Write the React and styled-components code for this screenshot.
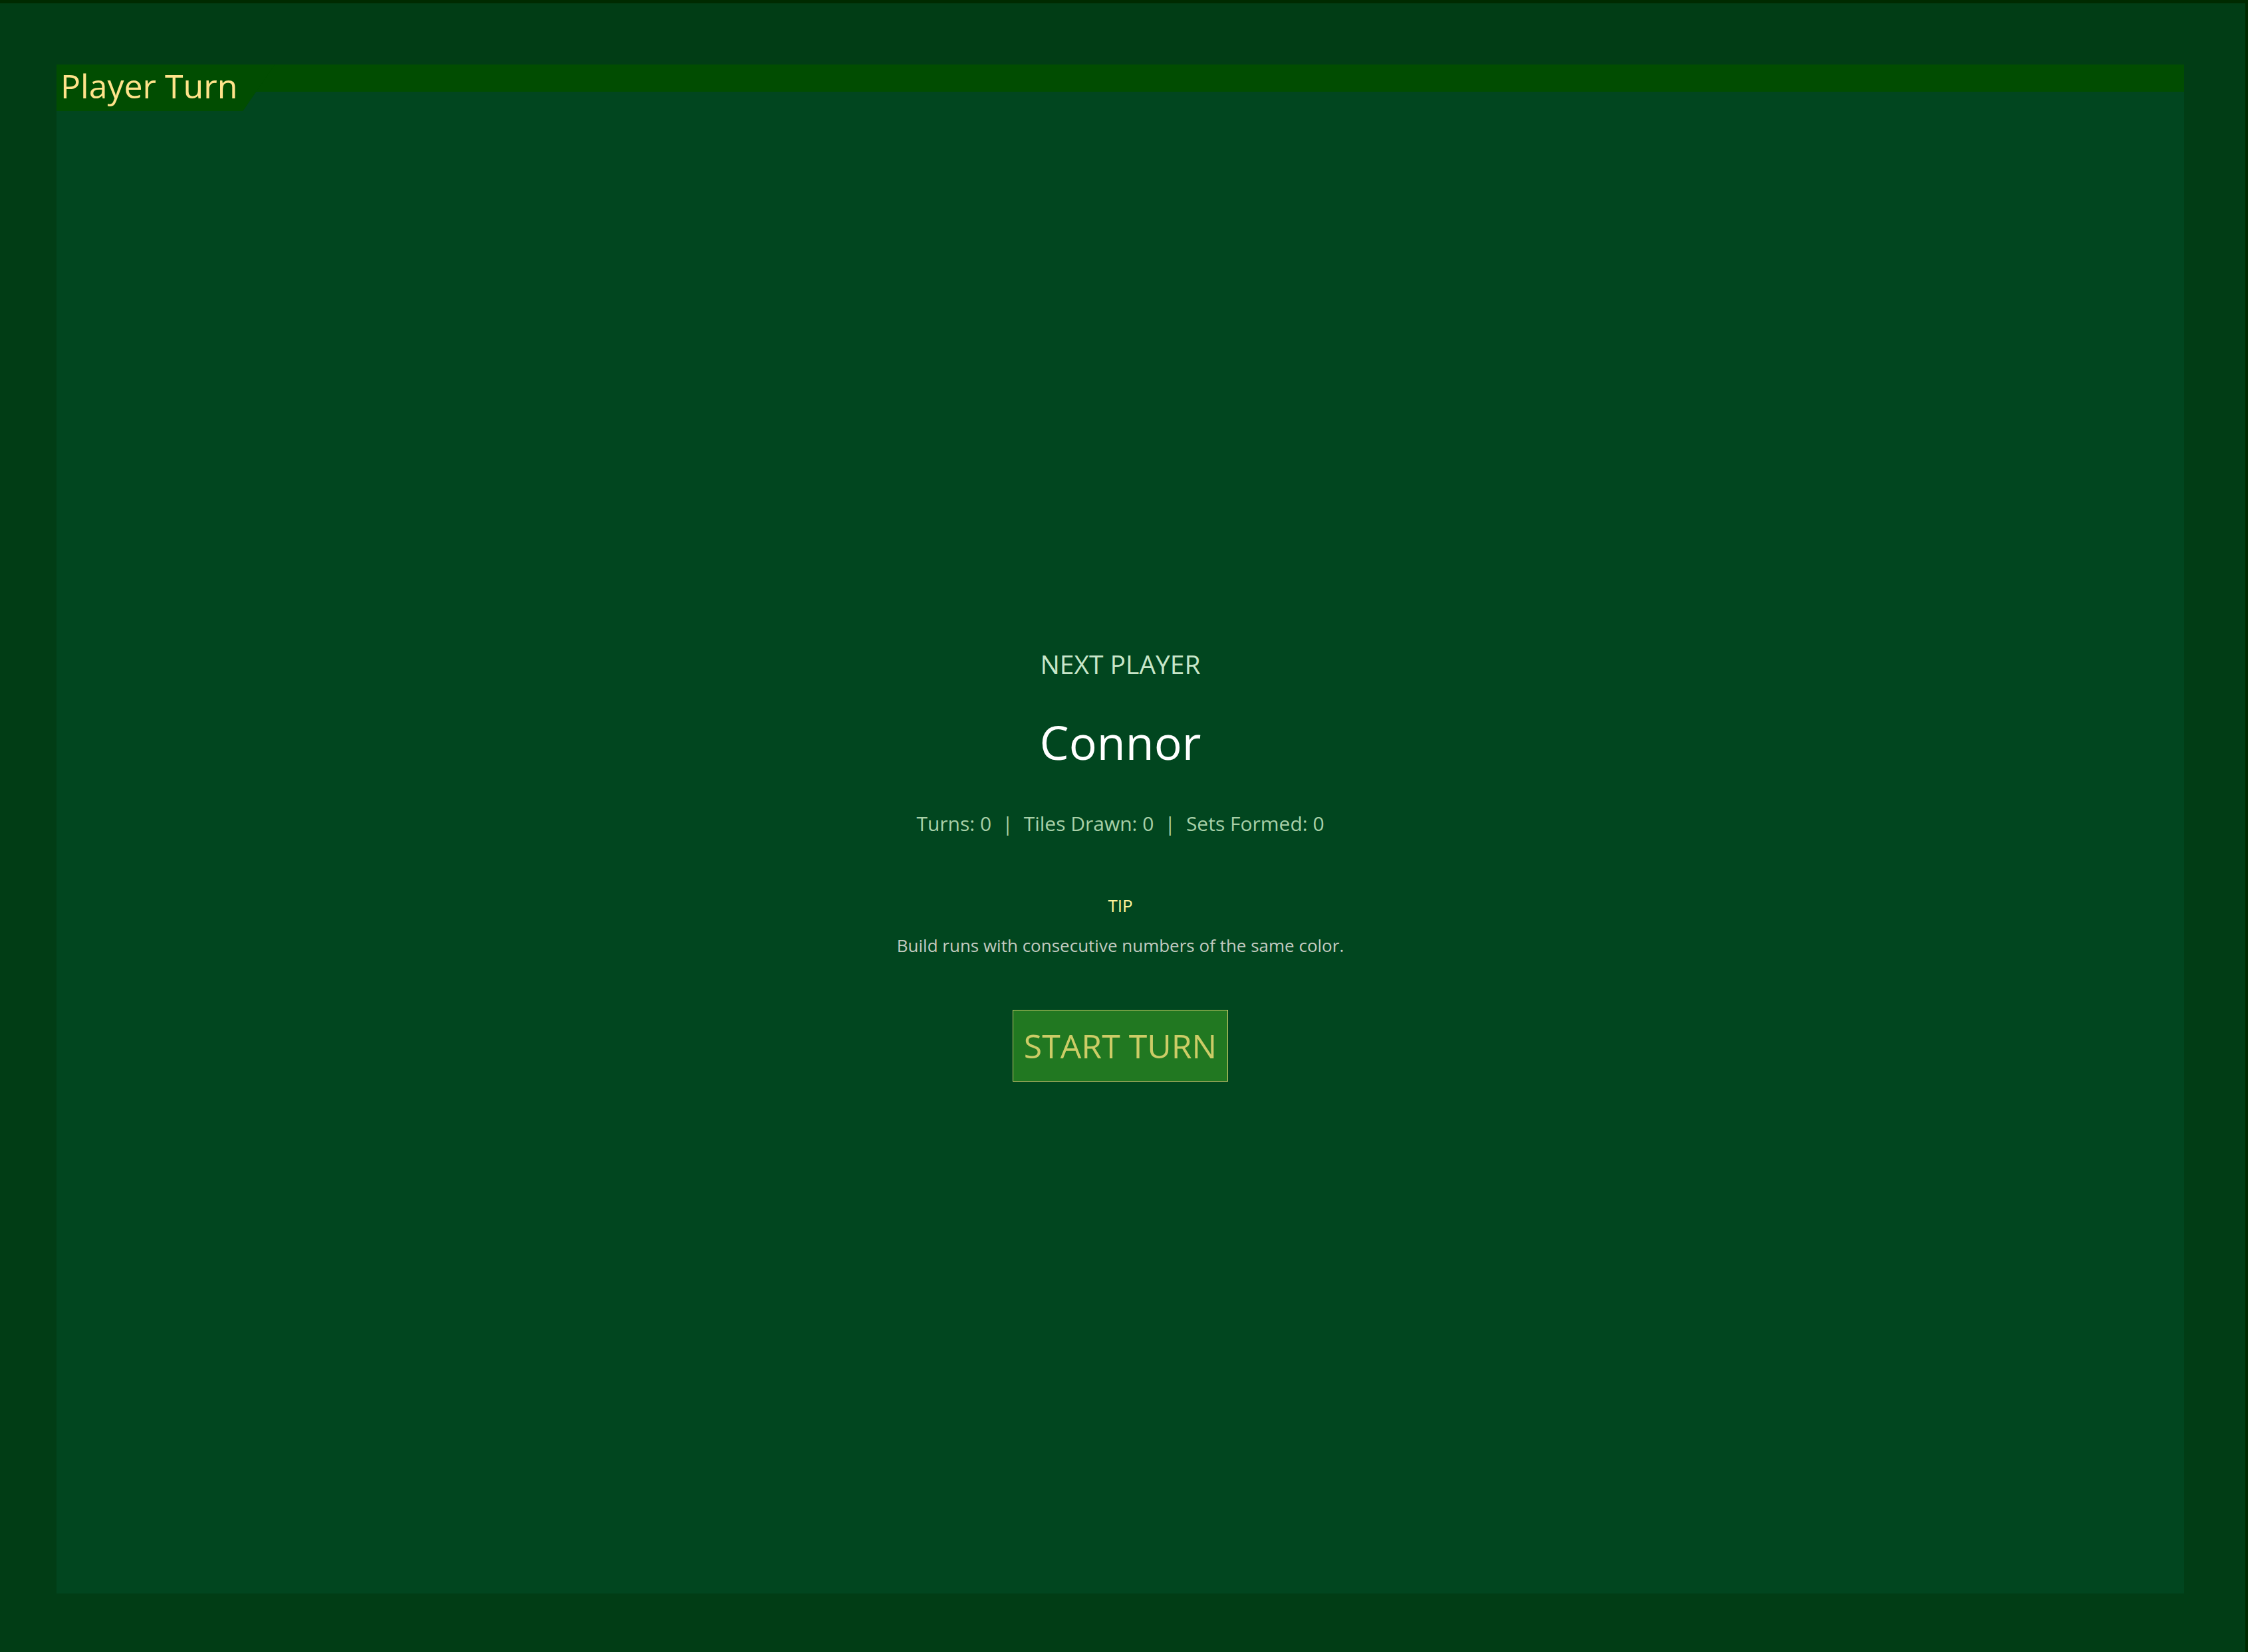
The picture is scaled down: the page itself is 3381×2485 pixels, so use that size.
import React from "react";
import styled, { createGlobalStyle } from "styled-components";

const GlobalStyle = createGlobalStyle`
  html, body {
    margin: 0;
    padding: 0;
    background: #002a00;
  }
  body {
    font-family: "Open Sans", "Noto Sans", sans-serif;
  }
`;

const Screen = styled.div`
  box-sizing: border-box;
  width: 3377px;
  height: 2480px;
  margin-top: 5px;
  background: #013d15;
  padding: 92px 92px 88px 85px;
  display: flex;
`;

const Panel = styled.section`
  flex: 1;
  display: flex;
  flex-direction: column;
  background: #01461f;
`;

const Header = styled.header`
  position: relative;
  height: 41px;
  background: #014d01;
  flex-shrink: 0;
`;

const Tab = styled.h1`
  position: absolute;
  top: 0;
  left: 0;
  margin: 0;
  padding: 2px 56px 8px 6px;
  background: #014d01;
  clip-path: polygon(0 0, 100% 0, calc(100% - 48px) 100%, 0 100%);
  color: #ffe38a;
  font-size: 50px;
  font-weight: 400;
  line-height: 60px;
  white-space: nowrap;
`;

const Body = styled.div`
  flex: 1;
  display: flex;
  flex-direction: column;
  align-items: center;
  justify-content: center;
  padding-top: 68px;
  text-align: center;
`;

const Label = styled.div`
  color: ${(p) => p.color};
  font-size: ${(p) => p.size}px;
  line-height: 1.2;
  margin-top: ${(p) => p.gap || 0}px;
`;

const Name = styled.h2`
  margin: 51px 0 0;
  color: #ffffff;
  font-size: 70px;
  font-weight: 400;
  line-height: 1.2;
`;

const Stats = styled.div`
  margin-top: 63px;
  color: #a8d0a8;
  font-size: 30px;
  line-height: 1.2;
  display: flex;
`;

const Sep = styled.span`
  margin: 0 16px;
`;

const StartButton = styled.button`
  margin-top: 81px;
  padding: 23px 16px;
  background: #217821;
  border: 1px solid #c8c86a;
  border-radius: 0;
  color: #cccc66;
  font-family: "Open Sans", "Noto Sans", sans-serif;
  font-size: 50px;
  line-height: 60px;
  cursor: pointer;
`;

const stats = [
  ["Turns", 0],
  ["Tiles Drawn", 0],
  ["Sets Formed", 0],
];

export default function App() {
  return (
    <>
      <GlobalStyle />
      <Screen>
        <Panel>
          <Header>
            <Tab>Player Turn</Tab>
          </Header>
          <Body>
            <Label size={39} color="#c8e6c9">
              NEXT PLAYER
            </Label>
            <Name>Connor</Name>
            <Stats>
              {stats.map(([k, v], i) => (
                <React.Fragment key={k}>
                  {i > 0 && <Sep>|</Sep>}
                  <span>
                    {k}: {v}
                  </span>
                </React.Fragment>
              ))}
            </Stats>
            <Label size={26} color="#fff59d" gap={90}>
              TIP
            </Label>
            <Label size={26} color="#c3cbc0" gap={29}>
              Build runs with consecutive numbers of the same color.
            </Label>
            <StartButton>START TURN</StartButton>
          </Body>
        </Panel>
      </Screen>
    </>
  );
}
